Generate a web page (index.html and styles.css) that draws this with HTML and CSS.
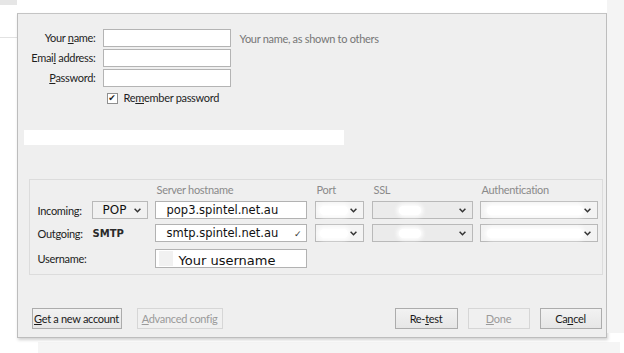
FILE: index.html
```html
<!DOCTYPE html>
<html lang="en">
<head>
  <meta charset="UTF-8" />
  <title>Mail Account Setup</title>
  <link rel="stylesheet" href="styles.css">
</head>
<body>
  <div class="screen">
    <div class="side-left">
      <div class="side-tab"></div>
      <div class="side-line"></div>
    </div>

    <div class="dialog">
      <div class="identity">
        <label class="lbl" for="name">Your <u>n</u>ame:</label>
        <input class="field" id="name" type="text">
        <span class="hint">Your name, as shown to others</span>

        <label class="lbl" for="email">Emai<u>l</u> address:</label>
        <input class="field" id="email" type="text">
        <span></span>

        <label class="lbl" for="pass"><u>P</u>assword:</label>
        <input class="field" id="pass" type="password">
        <span></span>

        <span></span>
        <label class="remember">
          <span class="check">&#10004;</span><span>Re<u>m</u>ember password</span>
        </label>
        <span></span>
      </div>

      <div class="status-bar"></div>

      <div class="servers">
        <span></span>
        <span></span>
        <span class="head">Server hostname</span>
        <span class="head">Port</span>
        <span class="head">SSL</span>
        <span class="head">Authentication</span>

        <span class="row-lbl">Incoming:</span>
        <div class="select type"><span class="val">POP</span><svg class="chev" width="7" height="5" viewBox="0 0 7 5"><path d="M0.6 0.8 L3.5 3.7 L6.4 0.8" fill="none" stroke="#333" stroke-width="1.5"/></svg></div>
        <div class="host"><span class="host-text">pop3.spintel.net.au</span></div>
        <div class="select port"><span class="blur"></span><svg class="chev" width="7" height="5" viewBox="0 0 7 5"><path d="M0.6 0.8 L3.5 3.7 L6.4 0.8" fill="none" stroke="#333" stroke-width="1.5"/></svg></div>
        <div class="select ssl"><span class="blur"></span><svg class="chev" width="7" height="5" viewBox="0 0 7 5"><path d="M0.6 0.8 L3.5 3.7 L6.4 0.8" fill="none" stroke="#333" stroke-width="1.5"/></svg></div>
        <div class="select auth"><span class="blur"></span><svg class="chev" width="7" height="5" viewBox="0 0 7 5"><path d="M0.6 0.8 L3.5 3.7 L6.4 0.8" fill="none" stroke="#333" stroke-width="1.5"/></svg></div>

        <span class="row-lbl">Outgoing:</span>
        <span class="smtp">SMTP</span>
        <div class="host"><span class="host-text">smtp.spintel.net.au</span><span class="tick">&#10003;</span></div>
        <div class="select port"><span class="blur"></span><svg class="chev" width="7" height="5" viewBox="0 0 7 5"><path d="M0.6 0.8 L3.5 3.7 L6.4 0.8" fill="none" stroke="#333" stroke-width="1.5"/></svg></div>
        <div class="select ssl"><span class="blur"></span><svg class="chev" width="7" height="5" viewBox="0 0 7 5"><path d="M0.6 0.8 L3.5 3.7 L6.4 0.8" fill="none" stroke="#333" stroke-width="1.5"/></svg></div>
        <div class="select auth"><span class="blur"></span><svg class="chev" width="7" height="5" viewBox="0 0 7 5"><path d="M0.6 0.8 L3.5 3.7 L6.4 0.8" fill="none" stroke="#333" stroke-width="1.5"/></svg></div>

        <span class="row-lbl user-row">Username:</span>
        <span></span>
        <div class="host user"><span class="user-mark"></span><span class="user-text">Your username</span></div>
      </div>

      <div class="actions">
        <button class="btn wide"><u>G</u>et a new account</button>
        <button class="btn adv" disabled><u>A</u>dvanced config</button>
        <span class="spacer"></span>
        <button class="btn retest">Re-<u>t</u>est</button>
        <button class="btn" disabled><u>D</u>one</button>
        <button class="btn">Ca<u>n</u>cel</button>
      </div>
    </div>

    <div class="side-right"></div>
  </div>
  <div class="bottom-strip"></div>
</body>
</html>
```

FILE: styles.css
```css
* {
  margin: 0;
  padding: 0;
  box-sizing: border-box;
}

body {
  background: #ffffff;
  font-family: Lato, 'Noto Sans', sans-serif;
  font-size: 11px;
  letter-spacing: -0.3px;
  color: #1e1e1e;
  width: 624px;
  height: 353px;
  overflow: hidden;
  white-space: nowrap;
}

.screen {
  display: flex;
  height: 340px;
}

.side-left {
  width: 17px;
  display: flex;
  flex-direction: column;
}

.side-tab {
  height: 5px;
  background: #e6e6e6;
}

.side-line {
  margin-top: 32px;
  height: 1px;
  background: #e2e2e2;
}

.side-right {
  width: 18px;
  height: 333px;
  background: #f4f4f4;
}

/* dialog */
.dialog {
  width: 590px;
  margin-top: 13px;
  height: 325px;
  background: #efefef;
  border: 1px solid #bdbdbd;
  border-top-color: #c4c4c4;
  box-shadow: 1px 2px 3px rgba(0, 0, 0, 0.18);
  padding: 15px 4px 0 6px;
  display: flex;
  flex-direction: column;
}

.identity {
  display: grid;
  grid-template-columns: 72px 128px auto;
  column-gap: 7px;
  row-gap: 2px;
  align-items: center;
}

.lbl {
  text-align: right;
  line-height: 18px;
}

.field {
  height: 18px;
  border: 1px solid #b4b4b4;
  background: #ffffff;
}

.hint {
  color: #767676;
  margin-left: 2px;
}

.remember {
  display: flex;
  align-items: center;
  gap: 6px;
  margin-left: 4px;
  margin-top: 2px;
  line-height: 14px;
}

.check {
  width: 11px;
  height: 11px;
  border: 1px solid #8f8f8f;
  background: #ffffff;
  font-size: 9px;
  line-height: 9px;
  text-align: center;
  color: #222;
  letter-spacing: 0;
  font-family: 'DejaVu Sans', sans-serif;
}

.status-bar {
  width: 320px;
  height: 15px;
  background: #ffffff;
  margin-top: 25px;
}

/* server settings */
.servers {
  margin: 34px 0 0 5px;
  width: 574px;
  height: 96px;
  border: 1px solid #dcdcdc;
  padding: 3px 0 0 8px;
  display: grid;
  grid-template-columns: 54px 63px 160px 57px 108px 118px;
  grid-template-rows: 13px 18px 18px 19px;
  row-gap: 5px;
  align-items: center;
  align-content: start;
}

.head {
  color: #8a8a8a;
  margin-left: 2px;
  line-height: 13px;
}

.row-lbl {
  color: #222;
}

.user-row {
  margin-top: 4px;
}

.select {
  height: 18px;
  border: 1px solid #b9b9b9;
  background: #f7f7f7;
  position: relative;
  display: flex;
  align-items: center;
}

.chev {
  position: absolute;
  right: 6px;
  top: 6px;
}

.type {
  width: 56px;
  background: #f1f1f1;
}

.val {
  font-family: 'DejaVu Sans', sans-serif;
  font-size: 12px;
  letter-spacing: 0;
  margin-left: 10px;
  color: #111;
}

.smtp {
  font-family: 'DejaVu Sans', sans-serif;
  font-size: 10px;
  letter-spacing: 0;
  font-weight: bold;
  color: #2a2a2a;
  margin-left: 1px;
}

.host {
  width: 152px;
  height: 18px;
  border: 1px solid #b2b2b2;
  background: #ffffff;
  position: relative;
  display: flex;
  align-items: center;
}

.host-text {
  font-family: 'DejaVu Sans', sans-serif;
  font-size: 11.5px;
  letter-spacing: 0;
  margin-left: 11px;
  color: #111;
}

.tick {
  position: absolute;
  right: 4px;
  font-size: 9px;
  color: #333;
}

.user {
  height: 19px;
  margin-top: 4px;
}

.user-mark {
  width: 14px;
  height: 15px;
  background: #f1f1f1;
  margin-left: 3px;
}

.user-text {
  font-family: 'DejaVu Sans', sans-serif;
  font-size: 13px;
  letter-spacing: 0;
  margin-left: 6px;
  margin-top: 3px;
  color: #111;
}

.blur {
  height: 9px;
  background: #ffffff;
  border-radius: 5px;
  box-shadow: 0 0 4px 2px #ffffff;
}

.port {
  width: 49px;
  background: #f4f4f4;
}

.port .blur {
  width: 28px;
  margin-left: 4px;
}

.ssl {
  width: 101px;
  background: #ebebeb;
}

.ssl .blur {
  width: 22px;
  margin-left: 26px;
}

.auth {
  width: 118px;
  background: #f3f3f3;
}

.auth .blur {
  width: 96px;
  margin-left: 6px;
}

/* bottom buttons */
.actions {
  margin-top: auto;
  margin-bottom: 8px;
  display: flex;
  align-items: center;
  padding-left: 8px;
}

.btn {
  height: 21px;
  width: 62px;
  font-family: inherit;
  font-size: 11px;
  letter-spacing: -0.3px;
  color: #1a1a1a;
  background: linear-gradient(#f2f2f2, #e6e6e6);
  border: 1px solid #acacac;
  margin-left: 10px;
  white-space: nowrap;
}

.btn.wide {
  width: 90px;
  margin-left: 0;
}

.btn.adv {
  width: 86px;
  margin-left: 15px;
}

.btn:disabled {
  color: #9a9a9a;
  border-color: #d6d6d6;
  background: #f0f0f0;
}

.btn.retest {
  width: 63px;
}

.spacer {
  flex: 1;
}

.bottom-strip {
  margin: 2px 4px 0 38px;
  height: 11px;
  background: #f5f5f5;
}
```
